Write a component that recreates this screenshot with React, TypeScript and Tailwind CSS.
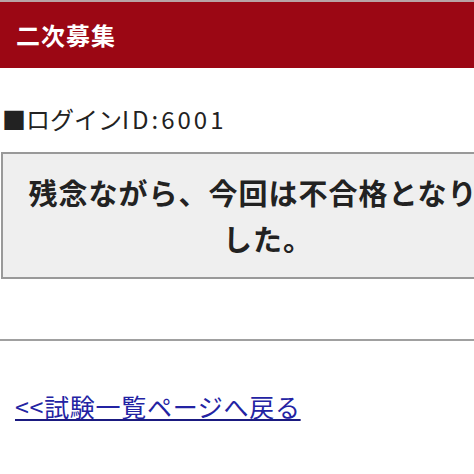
export default function App() {
  return (
    <div className="w-[474px] h-[474px] overflow-hidden bg-white font-['Noto_Sans_CJK_JP','Noto_Sans',sans-serif] text-[#222]">
      <header className="border-t-2 border-[#b9a3a5] bg-[#9b0714] h-[68px] flex items-center px-4">
        <h1 className="text-white text-[24px] font-bold tracking-[1px]">二次募集</h1>
      </header>

      <p className="mt-[33px] pl-[2px] text-[24px] leading-[36px]">
        ■ログイン<span className="tracking-[3px]">ID:6001</span>
      </p>

      <div className="mt-[15px] ml-px w-[534px] border-2 border-[#999] bg-[#efefef] px-[15px] pt-[15px] pb-[16px] text-center text-[29px] font-bold leading-[46px] tracking-[1px]">
        残念ながら、今回は不合格となりました。
      </div>

      <hr className="mt-[60px] border-t-2 border-[#a0a0a0]" />

      <div className="mt-[50px] pl-[15px]">
        <a href="#" className="text-[25px] leading-[30px] tracking-[0.7px] text-[#2323a3] underline decoration-[#1a1a80]">
          &lt;&lt;試験一覧ページへ戻る
        </a>
      </div>
    </div>
  );
}
